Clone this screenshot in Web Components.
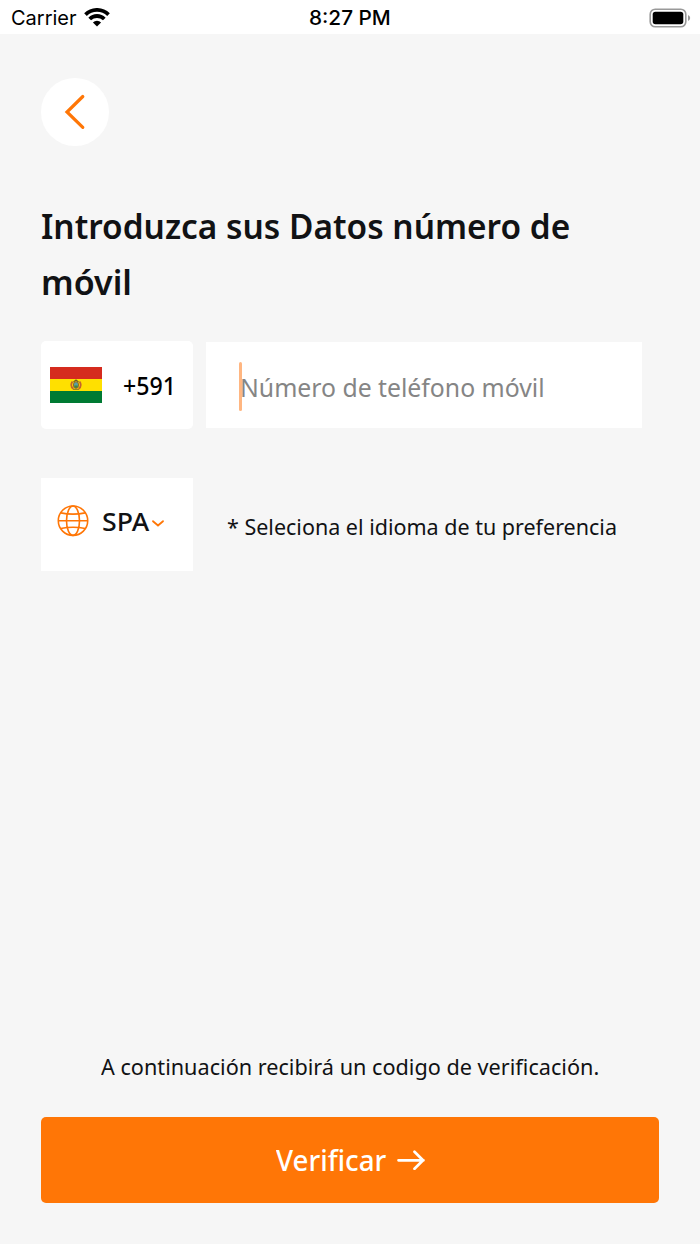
<!DOCTYPE html>
<html lang="es">
<head>
<meta charset="utf-8">
<meta name="viewport" content="width=device-width, initial-scale=1">
<title>Verificar</title>
<style>
  html, body {
    margin: 0;
    height: 100%;
  }

  body {
    background: #f6f6f6;
    color: #111214;
    font-family: "Noto Sans", "Open Sans", sans-serif;
    --accent: #ff7606;
  }
</style>
</head>
<body>
<phone-screen>
  <status-bar slot="status" carrier="Carrier" time="8:27 PM"></status-bar>
  <back-button></back-button>
  <screen-title>
    <fit-text width="529">Introduzca sus Datos número de</fit-text>
    <fit-text width="91">móvil</fit-text>
  </screen-title>
  <phone-field code="+591" placeholder="Número de teléfono móvil"></phone-field>
  <language-picker code="SPA">* Seleciona el idioma de tu preferencia</language-picker>
  <submit-footer slot="footer" action="Verificar">A continuación recibirá un codigo de verificación.</submit-footer>
</phone-screen>

<script>
  // Text that is condensed or stretched to a fixed width
  class FitText extends HTMLElement {
    constructor() {
      super();
      this.attachShadow({ mode: "open" });
      this.shadowRoot.innerHTML = `
        <style>
          :host { display: block; flex: none; white-space: nowrap; }
          span { display: inline-block; transform-origin: 0 50%; vertical-align: top; }
        </style>
        <span><slot></slot></span>
      `;
    }

    connectedCallback() {
      const width = Number(this.getAttribute("width"));
      const span = this.shadowRoot.querySelector("span");
      this.style.width = `${width}px`;
      span.style.transform = `scaleX(${width / span.offsetWidth})`;
    }
  }

  class PhoneScreen extends HTMLElement {
    constructor() {
      super();
      this.attachShadow({ mode: "open" });
      this.shadowRoot.innerHTML = `
        <style>
          :host { display: flex; flex-direction: column; height: 1244px; overflow: hidden; }
          main { flex: 1; padding: 44px 41px 0; }
        </style>
        <slot name="status"></slot>
        <main><slot></slot></main>
        <slot name="footer"></slot>
      `;
    }
  }

  class StatusBar extends HTMLElement {
    connectedCallback() {
      this.attachShadow({ mode: "open" });
      this.shadowRoot.innerHTML = `
        <style>
          :host {
            display: grid;
            grid-template-columns: 1fr auto 1fr;
            align-items: center;
            box-sizing: border-box;
            height: 34px;
            padding: 1px 9px 0 11px;
            background: #fff;
            color: #000;
            font: 20px/34px Inter, sans-serif;
          }
          .left { display: flex; align-items: center; gap: 7px; }
          .time { margin-left: -2px; font-weight: 500; }
          .battery { justify-self: end; }
          svg { display: block; }
        </style>
        <div class="left">
          <fit-text width="66">${this.getAttribute("carrier")}</fit-text>
          <svg width="26" height="20" viewBox="0 0 26 20">
            <g fill="none" stroke="#000" stroke-width="3.8">
              <path d="M1.5 6.6a16.4 16.4 0 0 1 23 0"/>
              <path d="M5.7 11a10.4 10.4 0 0 1 14.6 0"/>
            </g>
            <path d="M13 18.6l-4.1-4.1a5.8 5.8 0 0 1 8.2 0z"/>
          </svg>
        </div>
        <fit-text class="time" width="82">${this.getAttribute("time")}</fit-text>
        <svg class="battery" width="42" height="20" viewBox="0 0 42 20">
          <rect x="1.2" y="1.2" width="35.6" height="17.6" rx="5" fill="none" stroke="#999" stroke-width="1.6"/>
          <rect x="3.7" y="3.7" width="30.6" height="12.6" rx="2.7"/>
          <path d="M39 7q2.2 1 2.2 3T39 13z" fill="#999"/>
        </svg>
      `;
    }
  }

  class BackButton extends HTMLElement {
    constructor() {
      super();
      this.attachShadow({ mode: "open" });
      this.shadowRoot.innerHTML = `
        <style>
          :host {
            display: grid;
            place-items: center;
            width: 67.5px;
            height: 67.5px;
            border-radius: 50%;
            background: #fff;
            color: var(--accent);
          }
          svg { display: block; }
        </style>
        <svg width="24" height="38" viewBox="0 0 24 38">
          <path d="M19.8 3.5L4 19l15.8 15.3" fill="none" stroke="currentColor" stroke-width="3.2" stroke-linecap="round" stroke-linejoin="miter"/>
        </svg>
      `;
    }
  }

  class ScreenTitle extends HTMLElement {
    constructor() {
      super();
      this.attachShadow({ mode: "open" });
      this.shadowRoot.innerHTML = `
        <style>
          :host { display: block; margin-top: 52px; font-size: 34.8px; line-height: 56px; font-weight: 600; }
        </style>
        <slot></slot>
      `;
    }
  }

  class BoliviaFlag extends HTMLElement {
    constructor() {
      super();
      this.attachShadow({ mode: "open" });
      this.shadowRoot.innerHTML = `
        <style>
          :host, svg { display: block; }
        </style>
        <svg width="52" height="36" viewBox="0 0 52 36">
          <path fill="#d52b1e" d="M0 0h52v12H0z"/>
          <path fill="#ffe000" d="M0 12h52v12H0z"/>
          <path fill="#007a33" d="M0 24h52v12H0z"/>
          <path d="M22.5 14.5q-3 4 .8 7.3M29.5 14.5q3 4-.8 7.3" fill="none" stroke="#c4632e" stroke-width="1.8"/>
          <path d="M23.5 15l2.5-2 2.5 2" fill="none" stroke="#6b5a2a" stroke-width="1.1"/>
          <ellipse cx="26" cy="18" rx="2.6" ry="3.3" fill="#5aa0a0" stroke="#966b22"/>
          <path d="M24.3 18.5h3.4v1.4l-1.7 1.3-1.7-1.3z" fill="#47843b"/>
          <path d="M23 22.3h6" stroke="#8a6a2a"/>
        </svg>
      `;
    }
  }

  class PhoneField extends HTMLElement {
    connectedCallback() {
      this.attachShadow({ mode: "open" });
      this.shadowRoot.innerHTML = `
        <style>
          :host {
            display: flex;
            align-items: center;
            gap: 13.4px;
            margin-top: 31.5px;
            font-size: 25.3px;
            line-height: 36px;
          }
          .code, .number {
            display: flex;
            align-items: center;
            box-sizing: border-box;
            background: #fff;
          }
          .code {
            width: 152px;
            height: 88px;
            padding-left: 9px;
            gap: 20.5px;
            border-radius: 5px;
            color: #000;
            font-weight: 500;
          }
          .number {
            width: 436px;
            height: 86px;
            padding: 3px 0 0 32.5px;
            color: #858585;
          }
          .caret {
            width: 3px;
            height: 49px;
            margin-right: -2px;
            border-radius: 2px;
            background: #ffb681;
          }
        </style>
        <div class="code">
          <bolivia-flag></bolivia-flag>
          <fit-text width="53">${this.getAttribute("code")}</fit-text>
        </div>
        <div class="number">
          <div class="caret"></div>
          <fit-text width="304.5">${this.getAttribute("placeholder")}</fit-text>
        </div>
      `;
    }
  }

  class LanguagePicker extends HTMLElement {
    connectedCallback() {
      this.attachShadow({ mode: "open" });
      this.shadowRoot.innerHTML = `
        <style>
          :host { display: flex; align-items: center; margin-top: 49px; }
          .picker {
            display: flex;
            align-items: center;
            box-sizing: border-box;
            width: 152px;
            height: 93px;
            padding: 0 0 7px 16px;
            background: #fff;
            font-size: 25px;
            line-height: 36px;
            font-weight: 500;
          }
          svg { display: block; fill: none; stroke: var(--accent); }
          .globe { margin-right: 12.5px; stroke-width: 1.6; }
          .chevron { margin: 5px 0 0 2.5px; stroke-width: 1.8; stroke-linecap: round; }
          .hint { margin: 2px 0 0 33.5px; font-size: 22px; line-height: 34px; }
        </style>
        <div class="picker">
          <svg class="globe" width="32" height="32" viewBox="0 0 32 32">
            <circle cx="16" cy="15.7" r="14.7"/>
            <ellipse cx="16" cy="15.7" rx="6.5" ry="14.7"/>
            <path d="M1.3 15.7h29.4M3.8 7.9q12.2 2.4 24.4 0M3.8 23.5q12.2-2.4 24.4 0"/>
          </svg>
          <fit-text width="47">${this.getAttribute("code")}</fit-text>
          <svg class="chevron" width="14" height="9" viewBox="0 0 14 9">
            <path d="M2 2.2l5 4.3 5-4.3"/>
          </svg>
        </div>
        <fit-text class="hint" width="390"><slot></slot></fit-text>
      `;
    }
  }

  class SubmitFooter extends HTMLElement {
    connectedCallback() {
      this.attachShadow({ mode: "open" });
      this.shadowRoot.innerHTML = `
        <style>
          :host {
            display: flex;
            flex-direction: column;
            align-items: center;
            padding: 0 41px 41px;
          }
          .note { margin-bottom: 34px; font-size: 22px; line-height: 34px; }
          button {
            display: flex;
            align-items: center;
            justify-content: center;
            gap: 11px;
            width: 100%;
            height: 86px;
            padding: 0;
            border: 0;
            border-radius: 5px;
            background: var(--accent);
            color: #fff;
            font: 500 28.5px/40px "Noto Sans", "Open Sans", sans-serif;
          }
          svg { display: block; }
        </style>
        <fit-text class="note" width="498"><slot></slot></fit-text>
        <button type="button">
          <fit-text width="110">${this.getAttribute("action")}</fit-text>
          <svg width="28" height="20" viewBox="0 0 28 20">
            <path d="M1.5 10.3h25M17.5 1.8L26 10.3l-8.5 8.5" fill="none" stroke="currentColor" stroke-width="2.7" stroke-linecap="round" stroke-linejoin="round"/>
          </svg>
        </button>
      `;
    }
  }

  customElements.define("phone-screen", PhoneScreen);
  customElements.define("status-bar", StatusBar);
  customElements.define("back-button", BackButton);
  customElements.define("screen-title", ScreenTitle);
  customElements.define("bolivia-flag", BoliviaFlag);
  customElements.define("phone-field", PhoneField);
  customElements.define("language-picker", LanguagePicker);
  customElements.define("submit-footer", SubmitFooter);
  // last, because it measures text that takes its font from the elements above
  customElements.define("fit-text", FitText);
</script>
</body>
</html>
